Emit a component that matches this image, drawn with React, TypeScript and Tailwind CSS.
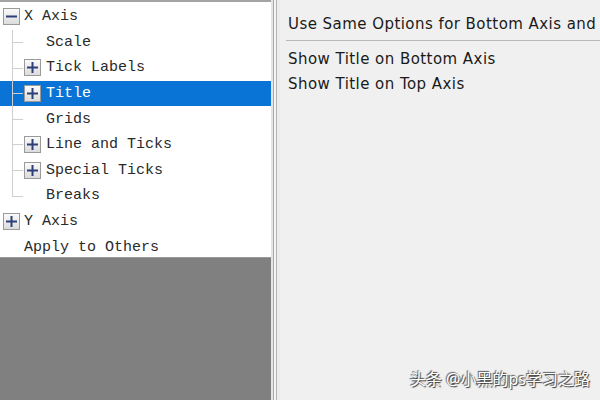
import React from 'react';

type Node = { label: string; level: number; box?: 'plus' | 'minus'; selected?: boolean; line?: boolean };

const nodes: Node[] = [
  { label: 'X Axis', level: 0, box: 'minus' },
  { label: 'Scale', level: 1, line: true },
  { label: 'Tick Labels', level: 1, box: 'plus', line: true },
  { label: 'Title', level: 1, box: 'plus', line: true, selected: true },
  { label: 'Grids', level: 1, line: true },
  { label: 'Line and Ticks', level: 1, box: 'plus', line: true },
  { label: 'Special Ticks', level: 1, box: 'plus', line: true },
  { label: 'Breaks', level: 1, line: true },
  { label: 'Y Axis', level: 0, box: 'plus' },
  { label: 'Apply to Others', level: 0 },
];

const ExpandBox = ({ kind }: { kind: 'plus' | 'minus' }) => (
  <div className="w-[17px] h-[17px] border border-[#9a9a9a] bg-gradient-to-b from-[#fafafa] to-[#dcdcdc] flex items-center justify-center">
    <svg width="13" height="13" viewBox="0 0 13 13">
      <rect x="1" y="5.5" width="11" height="2" fill="#2c3f78" />
      {kind === 'plus' && <rect x="5.5" y="1" width="2" height="11" fill="#2c3f78" />}
    </svg>
  </div>
);

const TreeRow = ({ node, last }: { node: Node; last: boolean }) => (
  <div className={`relative h-[25.6px] flex items-center ${node.selected ? 'bg-[#0a74d6] text-white' : 'text-[#2a2a2a]'}`}>
    {node.line && (
      <>
        <div className={`absolute left-[12px] w-px bg-[#cfcfcf] top-0 ${last ? 'h-[13px]' : 'h-full'}`} />
        <div className="absolute left-[12px] top-[12.5px] w-[11px] h-px bg-[#cfcfcf]" />
      </>
    )}
    {node.level === 0 ? (
      <div className="w-[24px] pl-[3px] flex items-center">{node.box && <ExpandBox kind={node.box} />}</div>
    ) : (
      <div className="w-[46px] pl-[24px] flex items-center">{node.box && <ExpandBox kind={node.box} />}</div>
    )}
    <span className="leading-none">{node.label}</span>
  </div>
);

export default function App() {
  return (
    <div className="w-[600px] h-[400px] flex bg-[#f0f0f0] overflow-hidden">
      <div className="w-[271px] shrink-0 h-full flex flex-col">
        <div className="h-[2px] bg-[#a3a3a3]" />
        <div className="bg-white h-[255px] text-[15px] font-['Liberation_Mono',monospace] pt-[2px]">
          {nodes.map((n) => (
            <TreeRow key={n.label} node={n} last={n.label === 'Breaks'} />
          ))}
        </div>
        <div className="flex-1 bg-[#808080] border-t border-[#9a9a9a]" />
      </div>
      <div className="w-[9px] shrink-0 h-full flex">
        <div className="w-[2px] bg-[#e4e4e4]" />
        <div className="w-px bg-[#a8a8a8]" />
        <div className="w-[2px] bg-[#f4f4f4]" />
        <div className="w-px bg-[#b4b4b4]" />
        <div className="w-[3px] bg-[#ececec]" />
      </div>
      <div className="flex-1 min-w-0 relative font-['DejaVu_Sans',sans-serif] text-[15px] tracking-[0.45px] text-[#1a1a1a]">
        <div className="pl-[8px] pt-[14px] whitespace-nowrap leading-[20px]">Use Same Options for Bottom Axis and</div>
        <div className="ml-[6px] mt-[6px] h-px bg-[#b9b9b9]" />
        <div className="pl-[8px] pt-[6px] leading-[25px] whitespace-nowrap">
          <div>Show Title on Bottom Axis</div>
          <div>Show Title on Top Axis</div>
        </div>
        <div className="absolute right-[10px] bottom-[9px] tracking-normal text-white text-[16px] font-['Noto_Sans','Noto_Sans_CJK_SC',sans-serif] [text-shadow:1px_1px_1px_#333,-1px_-1px_1px_#555]">
          头条 @小黑的ps学习之路
        </div>
      </div>
    </div>
  );
}
